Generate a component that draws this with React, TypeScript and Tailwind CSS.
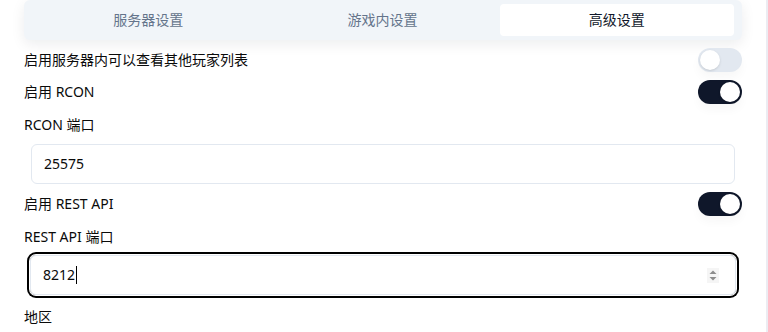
import React from "react";

const font = { fontFamily: '"Noto Sans", "Noto Sans CJK SC", sans-serif' };

function Switch({ on }: { on: boolean }) {
  return (
    <div
      className={`flex h-6 w-11 shrink-0 items-center rounded-full border-2 border-transparent shadow-[0_6px_10px_rgba(0,0,0,0.03)] ${
        on ? "bg-[#0f172a]" : "bg-[#e2e8f0]"
      }`}
    >
      <div
        className={`h-5 w-5 rounded-full bg-white shadow ${on ? "translate-x-5" : "translate-x-0"}`}
      />
    </div>
  );
}

function Row({ label, on }: { label: string; on: boolean }) {
  return (
    <div className="mt-2 flex h-6 items-center justify-between">
      <span className="text-sm leading-5 text-[#0a0a0a]">{label}</span>
      <Switch on={on} />
    </div>
  );
}

export default function App() {
  return (
    <div className="flex h-[332px] w-[768px] overflow-hidden bg-white" style={font}>
      <div className="w-[766px] px-6">
        <div className="grid h-10 grid-cols-3 rounded-md bg-[#f1f5f9] py-1 pl-[7px] pr-[8px] shadow-[0_4px_14px_rgba(15,23,42,0.08)]">
          <div className="flex items-center justify-center text-sm text-[#64748b]">服务器设置</div>
          <div className="flex items-center justify-center text-sm text-[#64748b]">游戏内设置</div>
          <div className="flex items-center justify-center rounded-sm bg-white text-sm text-[#0f172a]">高级设置</div>
        </div>

        <Row label="启用服务器内可以查看其他玩家列表" on={false} />
        <Row label="启用 RCON" on={true} />

        <div className="mt-[11px] h-5 text-sm leading-5 text-[#0a0a0a]">RCON 端口</div>
        <div className="mx-[7px] mt-[9px] flex h-10 items-center rounded-md border border-[#e2e8f0] px-3 text-sm text-[#0a0a0a]">
          25575
        </div>

        <div className="mt-2 flex h-6 items-center justify-between">
          <span className="text-sm leading-5 text-[#0a0a0a]">启用 REST API</span>
          <Switch on={true} />
        </div>

        <div className="mt-[11px] h-5 text-sm leading-5 text-[#0a0a0a]">REST API 端口</div>
        <div className="relative mx-[6px] mt-2 flex h-10 items-center rounded-md border border-[#e2e8f0] px-3 text-sm text-[#0a0a0a] ring-2 ring-black ring-offset-1">
          <span>8212</span>
          <span className="ml-[1px] h-[18px] w-px bg-black" />
          <svg
            className="absolute right-[16px] top-[12px]"
            width="12"
            height="15"
            viewBox="0 0 12 15"
          >
            <rect x="0" y="0" width="12" height="15" fill="#f5f5f5" />
            <path d="M2.5 6 L6 2.5 L9.5 6 Z" fill="#8d8d8d" />
            <path d="M2.5 9 L6 12.5 L9.5 9 Z" fill="#8d8d8d" />
          </svg>
        </div>

        <div className="mt-3 h-5 text-sm leading-5 text-[#0a0a0a]">地区</div>
      </div>
      <div className="h-full w-[2px] bg-[#ececf2]" />
    </div>
  );
}
